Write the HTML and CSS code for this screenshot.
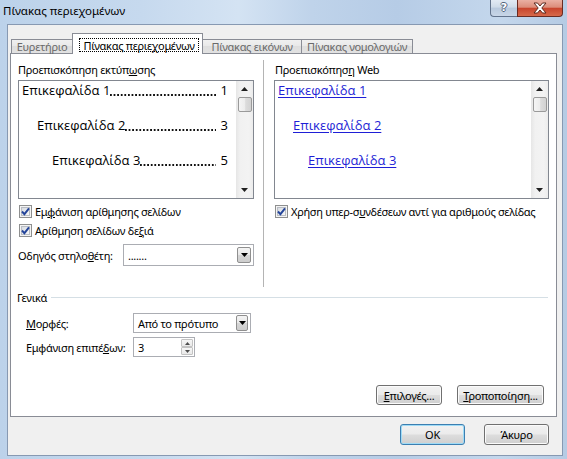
FILE: index.html
```html
<!DOCTYPE html>
<html lang="el">
<head>
<meta charset="utf-8">
<title>Πίνακας περιεχομένων</title>
<link rel="stylesheet" href="styles.css">
</head>
<body>
<div class="window">
  <div class="titlebar">
    <span class="title">Πίνακας περιεχομένων</span>
    <div class="caption">
      <div class="cap cap-help"><span class="qmark">?</span></div>
      <div class="cap cap-close">
        <svg width="14" height="12" viewBox="0 0 14 12"><path d="M1 1 L4.5 1 L7 4 L9.5 1 L13 1 L8.8 6 L13 11 L9.5 11 L7 8 L4.5 11 L1 11 L5.2 6 Z" fill="#ffffff" stroke="#5b2a20" stroke-width="1" stroke-linejoin="round"/></svg>
      </div>
    </div>
  </div>
  <div class="client">
    <div class="tabs">
      <div class="tab t1">Ευρετήριο</div>
      <div class="tab active t2"><span class="focus">Πίνακας περιε<u>χ</u>ομένων</span></div>
      <div class="tab t3">Πίνακας εικόνων</div>
      <div class="tab t4">Πίνακας νομολογιών</div>
    </div>
    <div class="panel">
      <div class="top">
        <div class="col col-left">
          <div class="label">Προεπισκόπηση εκτύπ<u>ω</u>σης</div>
          <div class="preview">
            <div class="preview-body">
              <div class="toc-line"><span>Επικεφαλίδα 1</span><span class="leader"></span><span class="num">1</span></div>
              <div class="toc-line lvl2"><span>Επικεφαλίδα 2</span><span class="leader"></span><span class="num">3</span></div>
              <div class="toc-line lvl3"><span>Επικεφαλίδα 3</span><span class="leader"></span><span class="num">5</span></div>
            </div>
            <div class="scrollbar">
              <div class="sb-btn"><svg width="7" height="4" viewBox="0 0 7 4"><path d="M0 4 L3.5 0 L7 4 Z" fill="#202020"/></svg></div>
              <div class="thumb"></div>
              <div class="track"></div>
              <div class="sb-btn"><svg width="7" height="4" viewBox="0 0 7 4"><path d="M0 0 L3.5 4 L7 0 Z" fill="#202020"/></svg></div>
            </div>
          </div>
          <div class="check-row first">
            <span class="checkbox"><svg width="9" height="9" viewBox="0 0 9 9"><path d="M1 4.5 L3.4 7.2 L8 1.3" fill="none" stroke="#23449a" stroke-width="1.9"/></svg></span>
            <span>Εμ<u>φ</u>άνιση αρίθμησης σελίδων</span>
          </div>
          <div class="check-row">
            <span class="checkbox"><svg width="9" height="9" viewBox="0 0 9 9"><path d="M1 4.5 L3.4 7.2 L8 1.3" fill="none" stroke="#23449a" stroke-width="1.9"/></svg></span>
            <span>Αρίθμηση σελίδων δε<u>ξ</u>ιά</span>
          </div>
          <div class="field-row">
            <span class="field-label">Οδηγός στηλο<u>θ</u>έτη:</span>
            <div class="combo combo-leader">
              <span class="combo-text">.......</span>
              <span class="drop"><svg width="7" height="4" viewBox="0 0 7 4"><path d="M0 0 L3.5 4 L7 0 Z" fill="#000"/></svg></span>
            </div>
          </div>
        </div>
        <div class="vsep"></div>
        <div class="col col-right">
          <div class="label">Προεπισκόπησ<u>η</u> Web</div>
          <div class="preview preview-web">
            <div class="preview-body">
              <div class="toc-line"><span class="link">Επικεφαλίδα 1</span></div>
              <div class="toc-line lvl2"><span class="link">Επικεφαλίδα 2</span></div>
              <div class="toc-line lvl3"><span class="link">Επικεφαλίδα 3</span></div>
            </div>
            <div class="scrollbar">
              <div class="sb-btn"><svg width="7" height="4" viewBox="0 0 7 4"><path d="M0 4 L3.5 0 L7 4 Z" fill="#202020"/></svg></div>
              <div class="thumb"></div>
              <div class="track"></div>
              <div class="sb-btn"><svg width="7" height="4" viewBox="0 0 7 4"><path d="M0 0 L3.5 4 L7 0 Z" fill="#202020"/></svg></div>
            </div>
          </div>
          <div class="check-row first">
            <span class="checkbox"><svg width="9" height="9" viewBox="0 0 9 9"><path d="M1 4.5 L3.4 7.2 L8 1.3" fill="none" stroke="#23449a" stroke-width="1.9"/></svg></span>
            <span>Χρήση υπερ-σ<u>υ</u>νδέσεων αντί για αριθμούς σελίδας</span>
          </div>
        </div>
      </div>
      <div class="group-head"><span>Γενικά</span><div class="gline"></div></div>
      <div class="form-row first">
        <span class="form-label"><u>Μ</u>ορφές:</span>
        <div class="combo combo-format">
          <span class="combo-text">Από το πρότυπο</span>
          <span class="drop"><svg width="7" height="4" viewBox="0 0 7 4"><path d="M0 0 L3.5 4 L7 0 Z" fill="#000"/></svg></span>
        </div>
      </div>
      <div class="form-row">
        <span class="form-label">Εμφάνιση επιπέ<u>δ</u>ων:</span>
        <div class="spin">
          <span class="combo-text">3</span>
          <span class="spin-btns">
            <span class="spin-btn"><svg width="5" height="3" viewBox="0 0 5 3"><path d="M0 3 L2.5 0 L5 3 Z" fill="#4d4d4d"/></svg></span>
            <span class="spin-btn"><svg width="5" height="3" viewBox="0 0 5 3"><path d="M0 0 L2.5 3 L5 0 Z" fill="#4d4d4d"/></svg></span>
          </span>
        </div>
      </div>
      <div class="panel-buttons">
        <div class="btn btn-options"><span><u>Ε</u>πιλογές...</span></div>
        <div class="btn btn-modify"><span><u>Τ</u>ροποποίηση...</span></div>
      </div>
    </div>
    <div class="dialog-buttons">
      <div class="btn btn-default">OK</div>
      <div class="btn">Άκυρο</div>
    </div>
  </div>
</div>
</body>
</html>
```

FILE: styles.css
```css
html, body {
  margin: 0;
  padding: 0;
}

body {
  font-family: "Noto Sans", "DejaVu Sans", sans-serif;
  font-size: 11px;
  letter-spacing: -0.3px;
  color: #000;
  width: 567px;
  height: 459px;
  overflow: hidden;
}

u {
  text-decoration: underline;
  text-underline-offset: 1px;
}

.window {
  width: 567px;
  height: 459px;
  box-sizing: border-box;
  padding: 0 4px 3px 7px;
  display: flex;
  flex-direction: column;
  background: linear-gradient(to right, #bcd2ea 0%, #c6d9ee 25%, #d4e3f3 42%, #bfd3ea 55%, #b6cce6 70%, #c4d7ec 88%, #b5cbe4 100%);
}

.titlebar {
  height: 24px;
  flex: none;
  display: flex;
  align-items: flex-start;
}

.title {
  font-size: 11.5px;
  letter-spacing: 0;
  line-height: 16px;
  padding-top: 3px;
  margin-left: -4px;
  color: #000;
}

.caption {
  margin-left: auto;
  display: flex;
}

.cap {
  height: 17px;
  box-sizing: border-box;
  display: flex;
  align-items: center;
  justify-content: center;
}

.cap-help {
  width: 27px;
  border: 1px solid #62738c;
  border-top: none;
  border-right: none;
  border-radius: 0 0 0 4px;
  background: linear-gradient(#e2eaf4, #cfdbe9 45%, #b8c9de 50%, #c8d6e7 100%);
}

.qmark {
  font-family: "DejaVu Sans", sans-serif;
  font-weight: bold;
  font-size: 11px;
  letter-spacing: 0;
  line-height: 12px;
  color: #ffffff;
  text-shadow: 1px 0 0 #55657c, -1px 0 0 #55657c, 0 1px 0 #55657c, 0 -1px 0 #55657c;
}

.cap-close {
  width: 46px;
  border: 1px solid #6a2b22;
  border-top: none;
  border-radius: 0 0 4px 0;
  background: linear-gradient(#eab0a3, #dc8d7a 45%, #c8452d 52%, #d76a4b 100%);
}

.cap-close svg {
  display: block;
}

.client {
  flex: 1;
  width: 556px;
  box-sizing: border-box;
  border: 1px solid #8799b2;
  background: #f0f0f0;
}

.tabs {
  display: flex;
  align-items: flex-end;
  height: 20px;
  margin-top: 8px;
  padding-left: 3px;
}

.tab {
  box-sizing: border-box;
  height: 14px;
  border: 1px solid #898c95;
  border-bottom: none;
  background: linear-gradient(#f0f0f0, #e8e8e8 50%, #dedede 50%, #e2e2e2);
  color: #6a6a6a;
  display: flex;
  align-items: center;
  justify-content: center;
  line-height: 13px;
  white-space: nowrap;
}

.t1 { width: 62px; }
.t2 { width: 131px; margin-left: -1px; }
.t3 { width: 100px; margin-left: -1px; }
.t4 { width: 112px; margin-left: -1px; }

.tab.active {
  height: 21px;
  margin-bottom: -1px;
  background: #ffffff;
  color: #000;
  position: relative;
  z-index: 1;
  padding: 4px 3px 2px 6px;
  align-items: stretch;
}

.focus {
  flex: 1;
  border: 1px dotted #000;
  display: flex;
  align-items: center;
  justify-content: center;
}

.panel {
  margin-left: 2px;
  width: 547px;
  height: 364px;
  box-sizing: border-box;
  border: 1px solid #898c95;
  background: #ffffff;
}

.top {
  display: flex;
  height: 234px;
}

.col {
  padding-top: 9px;
}

.col-left {
  margin-left: 7px;
  width: 236px;
}

.vsep {
  width: 1px;
  background: #b4b4b4;
  margin: 6px 0 1px 9px;
}

.col-right {
  margin-left: 10px;
  width: 275px;
}

.label {
  height: 14px;
  line-height: 14px;
  white-space: nowrap;
}

.col-right .label {
  padding-left: 1px;
}

.preview {
  margin-top: 3px;
  height: 119px;
  box-sizing: border-box;
  border: 1px solid #828790;
  display: flex;
  background: #fff;
}

.preview-body {
  flex: 1;
  min-width: 0;
  padding: 1px 8px 0 3px;
  font-family: "Open Sans", "Noto Sans", sans-serif;
  font-size: 13px;
  letter-spacing: 0;
}

.toc-line {
  display: flex;
  height: 17px;
  line-height: 17px;
  margin-bottom: 18px;
  white-space: nowrap;
}

.lvl2 { padding-left: 15px; }
.lvl3 { padding-left: 30px; }

.leader {
  flex: 1;
  min-width: 0;
  background-image: linear-gradient(to right, #111 2px, transparent 2px);
  background-size: 3.6px 2px;
  background-repeat: repeat-x;
  background-position: left 0 bottom 3px;
}

.num {
  padding-left: 5px;
}

.link {
  color: #1f1fd6;
  text-decoration: underline;
  text-underline-offset: 2px;
}

.scrollbar {
  width: 17px;
  flex: none;
  display: flex;
  flex-direction: column;
  background: linear-gradient(to right, #e6e6e6, #f1f1f1 25%, #f3f3f3 75%, #ececec);
}

.sb-btn {
  height: 16px;
  flex: none;
  display: flex;
  align-items: center;
  justify-content: center;
}

.thumb {
  height: 15px;
  flex: none;
  margin: 0 1px 0 2px;
  box-sizing: border-box;
  border: 1px solid #9a9a9a;
  border-radius: 2px;
  background: linear-gradient(to right, #f5f5f5, #ececec 50%, #dcdcdc 55%, #d2d2d2);
}

.track {
  flex: 1;
}

.check-row {
  display: flex;
  align-items: center;
  height: 19px;
  white-space: nowrap;
}

.check-row.first {
  margin-top: 3px;
}

.checkbox {
  width: 13px;
  height: 13px;
  box-sizing: border-box;
  border: 1px solid #8e8f8f;
  background: #f4f4f4;
  margin-left: 1px;
  margin-right: 3px;
  display: flex;
  align-items: center;
  justify-content: center;
  position: relative;
}

.checkbox::before {
  content: "";
  position: absolute;
  left: 1px;
  top: 1px;
  width: 9px;
  height: 9px;
  box-sizing: border-box;
  border: 1px solid #b9bdc4;
  background: linear-gradient(135deg, #d8dce2, #f7f7f7);
}

.checkbox svg {
  position: relative;
  display: block;
}

.field-row {
  display: flex;
  align-items: center;
  height: 22px;
  margin-top: 4px;
}

.field-label {
  width: 105px;
  white-space: nowrap;
}

.combo {
  box-sizing: border-box;
  border: 1px solid #abadb3;
  background: #fff;
  display: flex;
  align-items: center;
}

.combo-leader {
  width: 131px;
  height: 22px;
}

.combo-text {
  flex: 1;
  padding-left: 4px;
  white-space: nowrap;
}

.drop {
  width: 14px;
  align-self: stretch;
  margin: 2px;
  box-sizing: border-box;
  border: 1px solid #8f8f8f;
  border-radius: 2px;
  background: linear-gradient(#f4f4f4, #e8e8e8 50%, #d6d6d6 50%, #cdcdcd);
  display: flex;
  align-items: center;
  justify-content: center;
}

.group-head {
  display: flex;
  height: 14px;
  line-height: 14px;
  margin-top: 3px;
  padding-left: 6px;
}

.gline {
  flex: 1;
  height: 1px;
  background: #d5dfe5;
  margin: 6px 8px 0 4px;
}

.form-row {
  display: flex;
  align-items: center;
  height: 20px;
  padding-left: 15px;
  margin-top: 4px;
}

.form-row.first {
  margin-top: 8px;
}

.form-label {
  width: 107px;
  white-space: nowrap;
}

.combo-format {
  width: 118px;
  height: 20px;
}

.combo-format .drop {
  width: 12px;
  margin: 1px 2px 1px 1px;
}

.spin {
  width: 62px;
  height: 20px;
  box-sizing: border-box;
  border: 1px solid #abadb3;
  background: #fff;
  display: flex;
  align-items: center;
}

.spin-btns {
  width: 12px;
  align-self: stretch;
  margin: 1px 1px 1px 0;
  display: flex;
  flex-direction: column;
}

.spin-btn {
  flex: 1;
  box-sizing: border-box;
  border: 1px solid #c3c3c3;
  border-radius: 1px;
  background: linear-gradient(#f6f6f6, #e9e9e9);
  display: flex;
  align-items: center;
  justify-content: center;
}

.panel-buttons {
  display: flex;
  justify-content: flex-end;
  gap: 15px;
  margin-top: 28px;
  padding-right: 12px;
}

.btn {
  height: 20px;
  box-sizing: border-box;
  border: 1px solid #707070;
  border-radius: 3px;
  background: linear-gradient(#f2f2f2, #ebebeb 48%, #dddddd 52%, #cfcfcf);
  box-shadow: inset 0 0 0 1px #fbfbfb;
  display: flex;
  align-items: center;
  justify-content: center;
  white-space: nowrap;
  width: 65px;
}

.btn-options { width: 66px; }
.btn-modify { width: 87px; }

.dialog-buttons {
  display: flex;
  justify-content: flex-end;
  gap: 19px;
  margin-top: 7px;
  padding-right: 13px;
}

.dialog-buttons .btn {
  height: 21px;
}

.btn-default {
  border-color: #3c7fb1;
  box-shadow: inset 0 0 0 1px #9fdbf6;
}
```
